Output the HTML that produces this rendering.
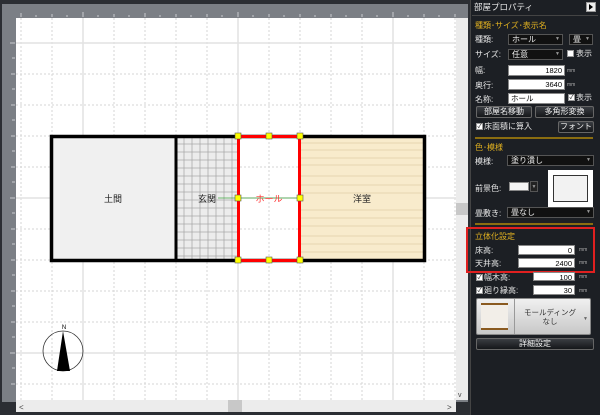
<!DOCTYPE html>
<html><head><meta charset="utf-8"><style>
*{margin:0;padding:0;box-sizing:border-box}
body{width:600px;height:415px;overflow:hidden;background:#1d2025;font-family:"Liberation Sans","Noto Sans CJK JP",sans-serif;position:relative}
.a{position:absolute}
.t{position:absolute;color:#e8e8e8;font-size:8px;line-height:10px;white-space:nowrap}
.y{color:#e0b020}
.in{position:absolute;background:#fff;border:1px solid #888;color:#000;font-size:7.5px;line-height:9px;text-align:right;padding-right:2px}
.dd{position:absolute;background:#111;border:1px solid #555;color:#eee;font-size:8px;line-height:9px;padding-left:3px}
.dd:after{content:"▼";position:absolute;right:2px;top:0;font-size:5px;color:#999}
.btn{position:absolute;background:linear-gradient(#3a3d42,#15171a);border:1px solid #666;border-radius:2px;color:#eee;font-size:8px;line-height:10px;text-align:center}
.cb{position:absolute;width:7px;height:7px;background:#fff;border:1px solid #999;font-size:6px;line-height:6px;color:#000;text-align:center}
.mm{position:absolute;font-size:5px;color:#aaa}
.sep{position:absolute;left:475px;width:118px;height:2px;background:#8a6d10}
</style></head><body>
<div class="a" style="left:0;top:0;width:470px;height:415px;background:#2b2e33"></div>
<div class="a" style="left:2px;top:4px;width:466px;height:398px;background:#7b7f85"></div>
<svg class="a" style="left:0;top:0" width="470" height="415">
<g stroke="#c8cbd0" stroke-width="1">
<line x1="21" y1="13" x2="21" y2="17"/><line x1="36" y1="15" x2="36" y2="17"/><line x1="52" y1="14" x2="52" y2="17"/><line x1="67" y1="15" x2="67" y2="17"/><line x1="83" y1="12" x2="83" y2="17"/><line x1="98" y1="15" x2="98" y2="17"/><line x1="114" y1="14" x2="114" y2="17"/><line x1="129" y1="15" x2="129" y2="17"/><line x1="145" y1="13" x2="145" y2="17"/><line x1="160" y1="15" x2="160" y2="17"/><line x1="176" y1="14" x2="176" y2="17"/><line x1="191" y1="15" x2="191" y2="17"/><line x1="207" y1="14" x2="207" y2="17"/><line x1="222" y1="15" x2="222" y2="17"/><line x1="238" y1="12" x2="238" y2="17"/><line x1="253" y1="15" x2="253" y2="17"/><line x1="269" y1="14" x2="269" y2="17"/><line x1="284" y1="15" x2="284" y2="17"/><line x1="300" y1="14" x2="300" y2="17"/><line x1="315" y1="15" x2="315" y2="17"/><line x1="331" y1="14" x2="331" y2="17"/><line x1="346" y1="15" x2="346" y2="17"/><line x1="362" y1="14" x2="362" y2="17"/><line x1="377" y1="15" x2="377" y2="17"/><line x1="393" y1="12" x2="393" y2="17"/><line x1="408" y1="15" x2="408" y2="17"/><line x1="424" y1="14" x2="424" y2="17"/><line x1="439" y1="15" x2="439" y2="17"/><line x1="455" y1="14" x2="455" y2="17"/>
<line x1="10" y1="43" x2="15" y2="43"/><line x1="12" y1="58" x2="15" y2="58"/><line x1="11" y1="74" x2="15" y2="74"/><line x1="12" y1="89" x2="15" y2="89"/><line x1="11" y1="105" x2="15" y2="105"/><line x1="12" y1="120" x2="15" y2="120"/><line x1="11" y1="136" x2="15" y2="136"/><line x1="12" y1="151" x2="15" y2="151"/><line x1="11" y1="167" x2="15" y2="167"/><line x1="12" y1="182" x2="15" y2="182"/><line x1="10" y1="198" x2="15" y2="198"/><line x1="12" y1="213" x2="15" y2="213"/><line x1="11" y1="229" x2="15" y2="229"/><line x1="12" y1="244" x2="15" y2="244"/><line x1="11" y1="260" x2="15" y2="260"/><line x1="12" y1="275" x2="15" y2="275"/><line x1="11" y1="291" x2="15" y2="291"/><line x1="12" y1="306" x2="15" y2="306"/><line x1="11" y1="322" x2="15" y2="322"/><line x1="12" y1="337" x2="15" y2="337"/><line x1="10" y1="353" x2="15" y2="353"/><line x1="12" y1="368" x2="15" y2="368"/><line x1="11" y1="384" x2="15" y2="384"/>
</g>
<rect x="16" y="18" width="440" height="382" fill="#fff"/>
<g stroke="#d6d6d6" stroke-dasharray="2,2">
<line x1="21" y1="18" x2="21" y2="400"/><line x1="52" y1="18" x2="52" y2="400"/><line x1="114" y1="18" x2="114" y2="400"/><line x1="145" y1="18" x2="145" y2="400"/><line x1="176" y1="18" x2="176" y2="400"/><line x1="207" y1="18" x2="207" y2="400"/><line x1="269" y1="18" x2="269" y2="400"/><line x1="300" y1="18" x2="300" y2="400"/><line x1="331" y1="18" x2="331" y2="400"/><line x1="362" y1="18" x2="362" y2="400"/><line x1="424" y1="18" x2="424" y2="400"/><line x1="455" y1="18" x2="455" y2="400"/>
<line x1="16" y1="74" x2="456" y2="74"/><line x1="16" y1="105" x2="456" y2="105"/><line x1="16" y1="136" x2="456" y2="136"/><line x1="16" y1="167" x2="456" y2="167"/><line x1="16" y1="229" x2="456" y2="229"/><line x1="16" y1="260" x2="456" y2="260"/><line x1="16" y1="291" x2="456" y2="291"/><line x1="16" y1="322" x2="456" y2="322"/><line x1="16" y1="384" x2="456" y2="384"/>
</g>
<g stroke="#e2e2e2" stroke-width="1.5">
<line x1="83" y1="18" x2="83" y2="400"/><line x1="238" y1="18" x2="238" y2="400"/><line x1="393" y1="18" x2="393" y2="400"/>
<line x1="16" y1="43" x2="456" y2="43"/><line x1="16" y1="198" x2="456" y2="198"/><line x1="16" y1="353" x2="456" y2="353"/>
</g>
<rect x="51" y="136" width="125" height="124" fill="#f0f0f0"/>
<rect x="176" y="136" width="62" height="124" fill="#ececec"/>
<g stroke="#aaa" stroke-width="0.8">
<line x1="184" y1="136" x2="184" y2="260"/><line x1="192" y1="136" x2="192" y2="260"/><line x1="200" y1="136" x2="200" y2="260"/><line x1="208" y1="136" x2="208" y2="260"/><line x1="216" y1="136" x2="216" y2="260"/><line x1="224" y1="136" x2="224" y2="260"/><line x1="232" y1="136" x2="232" y2="260"/>
<line x1="176" y1="144" x2="238" y2="144"/><line x1="176" y1="152" x2="238" y2="152"/><line x1="176" y1="160" x2="238" y2="160"/><line x1="176" y1="168" x2="238" y2="168"/><line x1="176" y1="176" x2="238" y2="176"/><line x1="176" y1="184" x2="238" y2="184"/><line x1="176" y1="192" x2="238" y2="192"/><line x1="176" y1="200" x2="238" y2="200"/><line x1="176" y1="208" x2="238" y2="208"/><line x1="176" y1="216" x2="238" y2="216"/><line x1="176" y1="224" x2="238" y2="224"/><line x1="176" y1="232" x2="238" y2="232"/><line x1="176" y1="240" x2="238" y2="240"/><line x1="176" y1="248" x2="238" y2="248"/><line x1="176" y1="256" x2="238" y2="256"/>
</g>
<rect x="300" y="136" width="125" height="124" fill="#f8ebcc"/>
<g stroke="#e6d6b0" stroke-width="1">
<line x1="300" y1="143" x2="425" y2="143"/><line x1="300" y1="150" x2="425" y2="150"/><line x1="300" y1="158" x2="425" y2="158"/><line x1="300" y1="165" x2="425" y2="165"/><line x1="300" y1="176" x2="425" y2="176"/><line x1="300" y1="185" x2="425" y2="185"/><line x1="300" y1="193" x2="425" y2="193"/><line x1="300" y1="210" x2="425" y2="210"/><line x1="300" y1="218" x2="425" y2="218"/><line x1="300" y1="226" x2="425" y2="226"/><line x1="300" y1="236" x2="425" y2="236"/><line x1="300" y1="244" x2="425" y2="244"/><line x1="300" y1="252" x2="425" y2="252"/>
</g>
<rect x="51.5" y="136.5" width="373" height="124" fill="none" stroke="#000" stroke-width="3.5"/>
<line x1="176" y1="136" x2="176" y2="260" stroke="#000" stroke-width="3"/>
<line x1="218" y1="198" x2="300" y2="198" stroke="#4a4" stroke-width="0.8"/>
<rect x="238.5" y="136.5" width="61" height="124" fill="none" stroke="#f00" stroke-width="3"/>
<g fill="#ff0" stroke="#555" stroke-width="0.6">
<rect x="235" y="133" width="6" height="6"/><rect x="266" y="133" width="6" height="6"/><rect x="297" y="133" width="6" height="6"/>
<rect x="235" y="195" width="6" height="6"/><rect x="297" y="195" width="6" height="6"/>
<rect x="235" y="257" width="6" height="6"/><rect x="266" y="257" width="6" height="6"/><rect x="297" y="257" width="6" height="6"/>
</g>
<text x="113" y="202" font-size="9" text-anchor="middle" fill="#222" font-family="Noto Sans CJK JP">土間</text>
<text x="207" y="202" font-size="9" text-anchor="middle" fill="#222" font-family="Noto Sans CJK JP">玄関</text>
<text x="269" y="202" font-size="9" text-anchor="middle" fill="#f33" font-family="Noto Sans CJK JP">ホール</text>
<text x="362" y="202" font-size="9" text-anchor="middle" fill="#222" font-family="Noto Sans CJK JP">洋室</text>
<circle cx="63" cy="351" r="20" fill="none" stroke="#333" stroke-width="0.8"/>
<polygon points="63,331 57,371 70,371" fill="#000"/>
<text x="64" y="329" font-size="6" text-anchor="middle" fill="#000">N</text>
<rect x="16" y="400" width="440" height="12" fill="#ececec"/>
<rect x="228" y="400" width="14" height="12" fill="#c8c8c8"/>
<rect x="456" y="18" width="12" height="382" fill="#ececec"/>
<rect x="456" y="203" width="12" height="12" fill="#c8c8c8"/>
<text x="19" y="410" font-size="8" fill="#444">&lt;</text>
<text x="447" y="410" font-size="8" fill="#444">&gt;</text>
<text x="458" y="397" font-size="7" fill="#444">v</text>
</svg>
<div class="a" style="left:470px;top:0;width:130px;height:415px;background:#1c1f24;border-left:1px solid #444"></div>
<div class="t" style="left:474px;top:2px;font-size:8.5px">部屋プロパティ</div>
<div class="a" style="left:586px;top:2px;width:10px;height:10px;background:#eee;border:1px solid #999"></div>
<div class="a" style="left:589px;top:4px;width:0;height:0;border-left:4px solid #000;border-top:3px solid transparent;border-bottom:3px solid transparent"></div>
<div class="a" style="left:472px;top:15px;width:126px;height:1px;background:#444"></div>
<div class="t y" style="left:475px;top:21px">種類･サイズ･表示名</div>
<div class="t" style="left:475px;top:35px">種類:</div>
<div class="dd" style="left:508px;top:34px;width:55px;height:11px">ホール</div>
<div class="dd" style="left:569px;top:34px;width:24px;height:11px">畳</div>
<div class="t" style="left:475px;top:50px">サイズ:</div>
<div class="dd" style="left:508px;top:49px;width:55px;height:11px">任意</div>
<div class="cb" style="left:567px;top:50px"></div><div class="t" style="left:576px;top:49px">表示</div>
<div class="t" style="left:475px;top:66px">幅:</div>
<div class="in" style="left:508px;top:65px;width:57px;height:11px">1820</div><div class="mm" style="left:567px;top:68px">mm</div>
<div class="t" style="left:475px;top:81px">奥行:</div>
<div class="in" style="left:508px;top:79px;width:57px;height:11px">3640</div><div class="mm" style="left:567px;top:82px">mm</div>
<div class="t" style="left:475px;top:95px">名称:</div>
<div class="in" style="left:508px;top:93px;width:57px;height:11px;text-align:left;padding-left:2px">ホール</div>
<div class="cb" style="left:568px;top:94px">✓</div><div class="t" style="left:576px;top:93px">表示</div>
<div class="btn" style="left:476px;top:106px;width:56px;height:12px">部屋名移動</div>
<div class="btn" style="left:535px;top:106px;width:59px;height:12px">多角形変換</div>
<div class="cb" style="left:476px;top:123px">✓</div><div class="t" style="left:484px;top:122px">床面積に算入</div>
<div class="btn" style="left:558px;top:121px;width:36px;height:12px">フォント</div>
<div class="sep" style="top:137px"></div>
<div class="t y" style="left:475px;top:143px">色･模様</div>
<div class="t" style="left:475px;top:157px">模様:</div>
<div class="dd" style="left:507px;top:155px;width:87px;height:11px">塗り潰し</div>
<div class="t" style="left:475px;top:184px">前景色:</div>
<div class="a" style="left:509px;top:182px;width:20px;height:9px;background:#f4f4f4;border:1px solid #888"></div>
<div class="a" style="left:530px;top:181px;width:8px;height:11px;background:#222;border:1px solid #555;color:#999;font-size:5px;text-align:center;line-height:10px">▼</div>
<div class="a" style="left:548px;top:170px;width:45px;height:37px;background:#fff"></div>
<div class="a" style="left:553px;top:175px;width:35px;height:27px;background:#f2f2f2;border:1px solid #333"></div>
<div class="t" style="left:475px;top:209px">畳敷き:</div>
<div class="dd" style="left:507px;top:207px;width:87px;height:11px">畳なし</div>
<div class="sep" style="top:223px"></div>
<div class="a" style="left:466px;top:227px;width:129px;height:46px;border:2px solid #e02020"></div>
<div class="t y" style="left:475px;top:232px">立体化設定</div>
<div class="t" style="left:475px;top:246px">床高:</div>
<div class="in" style="left:518px;top:245px;width:57px;height:10px">0</div><div class="mm" style="left:579px;top:247px">mm</div>
<div class="t" style="left:475px;top:259px">天井高:</div>
<div class="in" style="left:518px;top:258px;width:57px;height:10px">2400</div><div class="mm" style="left:579px;top:260px">mm</div>
<div class="cb" style="left:476px;top:274px">✓</div><div class="t" style="left:484px;top:273px">幅木高:</div>
<div class="in" style="left:533px;top:272px;width:42px;height:9px">100</div><div class="mm" style="left:579px;top:274px">mm</div>
<div class="cb" style="left:476px;top:287px">✓</div><div class="t" style="left:484px;top:286px">廻り縁高:</div>
<div class="in" style="left:533px;top:285px;width:42px;height:10px">30</div><div class="mm" style="left:579px;top:288px">mm</div>
<div class="a" style="left:476px;top:298px;width:115px;height:37px;background:linear-gradient(#f0f0f0,#c8c8c8);border:1px solid #888;border-radius:2px"></div>
<div class="a" style="left:514px;top:299px;width:1px;height:35px;background:#999"></div>
<div class="a" style="left:481px;top:303px;width:27px;height:27px;background:#f2eee8;border-top:2px solid #8a5a20;border-bottom:2px solid #8a5a20"></div>
<div class="a" style="left:516px;top:308px;color:#333;font-size:7.5px;line-height:9px;text-align:center;width:68px;white-space:nowrap">モールディング<br>なし</div>
<div class="a" style="left:583px;top:316px;color:#666;font-size:5px">▼</div>
<div class="btn" style="left:476px;top:338px;width:118px;height:12px">詳細設定</div>
</body></html>
